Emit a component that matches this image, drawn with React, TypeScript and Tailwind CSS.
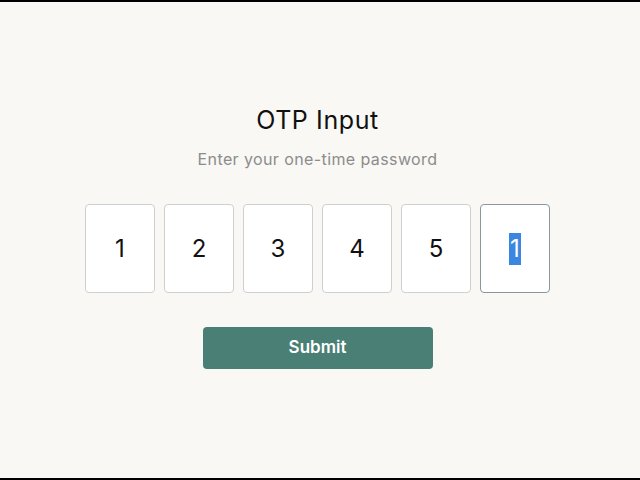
const digits = ["1", "2", "3", "4", "5", "1"];

export default function App() {
  return (
    <div className="flex h-[480px] w-[640px] flex-col bg-black">
      <div className="mt-[2px] mb-[2px] flex flex-1 flex-col items-center bg-[#f9f8f4] pr-[5px] font-['Inter',sans-serif]">
        <h1 className="mt-[103px] text-[25px] leading-[30px] font-normal tracking-[0.6px] text-[#111]">
          OTP Input
        </h1>
        <p className="mt-[14px] text-[16px] leading-[20px] tracking-[0.4px] text-[#8c8c8c]">
          Enter your one-time password
        </p>
        <div className="mt-[35px] flex gap-[9px]">
          {digits.map((d, i) => {
            const active = i === digits.length - 1;
            return (
              <div
                key={i}
                className={
                  active
                    ? "flex h-[89px] w-[70px] items-center justify-center rounded-[4px] border border-[#8a979d] bg-white"
                    : "flex h-[89px] w-[70px] items-center justify-center rounded-[4px] border border-[#cfcfcf] bg-white"
                }
              >
                <span
                  className={
                    active
                      ? "bg-[#3b86e0] px-[1px] text-[24px] leading-[32px] text-white"
                      : "text-[24px] leading-[32px] text-[#111]"
                  }
                >
                  {d}
                </span>
              </div>
            );
          })}
        </div>
        <button className="mt-[34px] h-[42px] w-[230px] rounded-[4px] bg-[#4a7f75] text-[17px] font-semibold text-white">
          Submit
        </button>
      </div>
    </div>
  );
}
